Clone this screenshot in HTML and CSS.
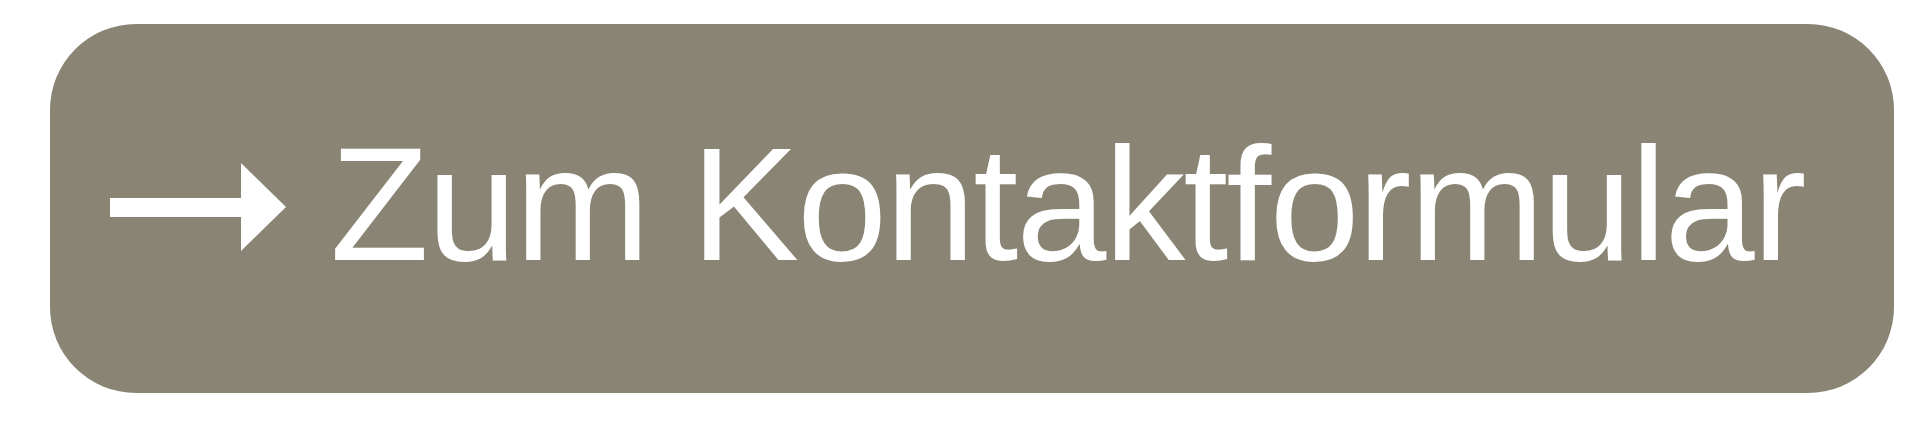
FILE: index.html
```html
<!DOCTYPE html>
<html>
<head>
  <meta charset="UTF-8">
  <title>Kontakt</title>
  <link rel="stylesheet" href="styles.css">
</head>
<body>
  <!-- Call to action: link to the contact form -->
  <a class="ctaButton" href="#kontakt">
    <svg class="ctaArrow" width="176" height="88" viewBox="0 0 176 88" aria-hidden="true">
      <rect x="0" y="35" width="133" height="19" fill="#fff"/>
      <polygon points="131,0 176,44 131,88" fill="#fff"/>
    </svg>
    <span class="ctaLabel">Zum Kontaktformular</span>
  </a>
</body>
</html>
```

FILE: styles.css
```css
body {
  margin: 0;
  padding: 0;
  background-color: #ffffff;
  font-family: "Liberation Sans", Arial, sans-serif;
}
/* Big rounded button */
.ctaButton {
  display: flex;
  align-items: center;
  gap: 44px;
  box-sizing: border-box;
  width: 1844px;
  height: 369px;
  margin: 24px 0 0 50px;
  padding: 0 0 9px 60px;
  border-radius: 86px;
  background-color: #8a8474;
  color: #ffffff;
  text-decoration: none;
}
.ctaArrow {
  flex-shrink: 0;
  margin-top: 6px;
}
.ctaLabel {
  font-size: 162px;
  letter-spacing: -2px;
  line-height: 1;
  white-space: nowrap;
}
```
